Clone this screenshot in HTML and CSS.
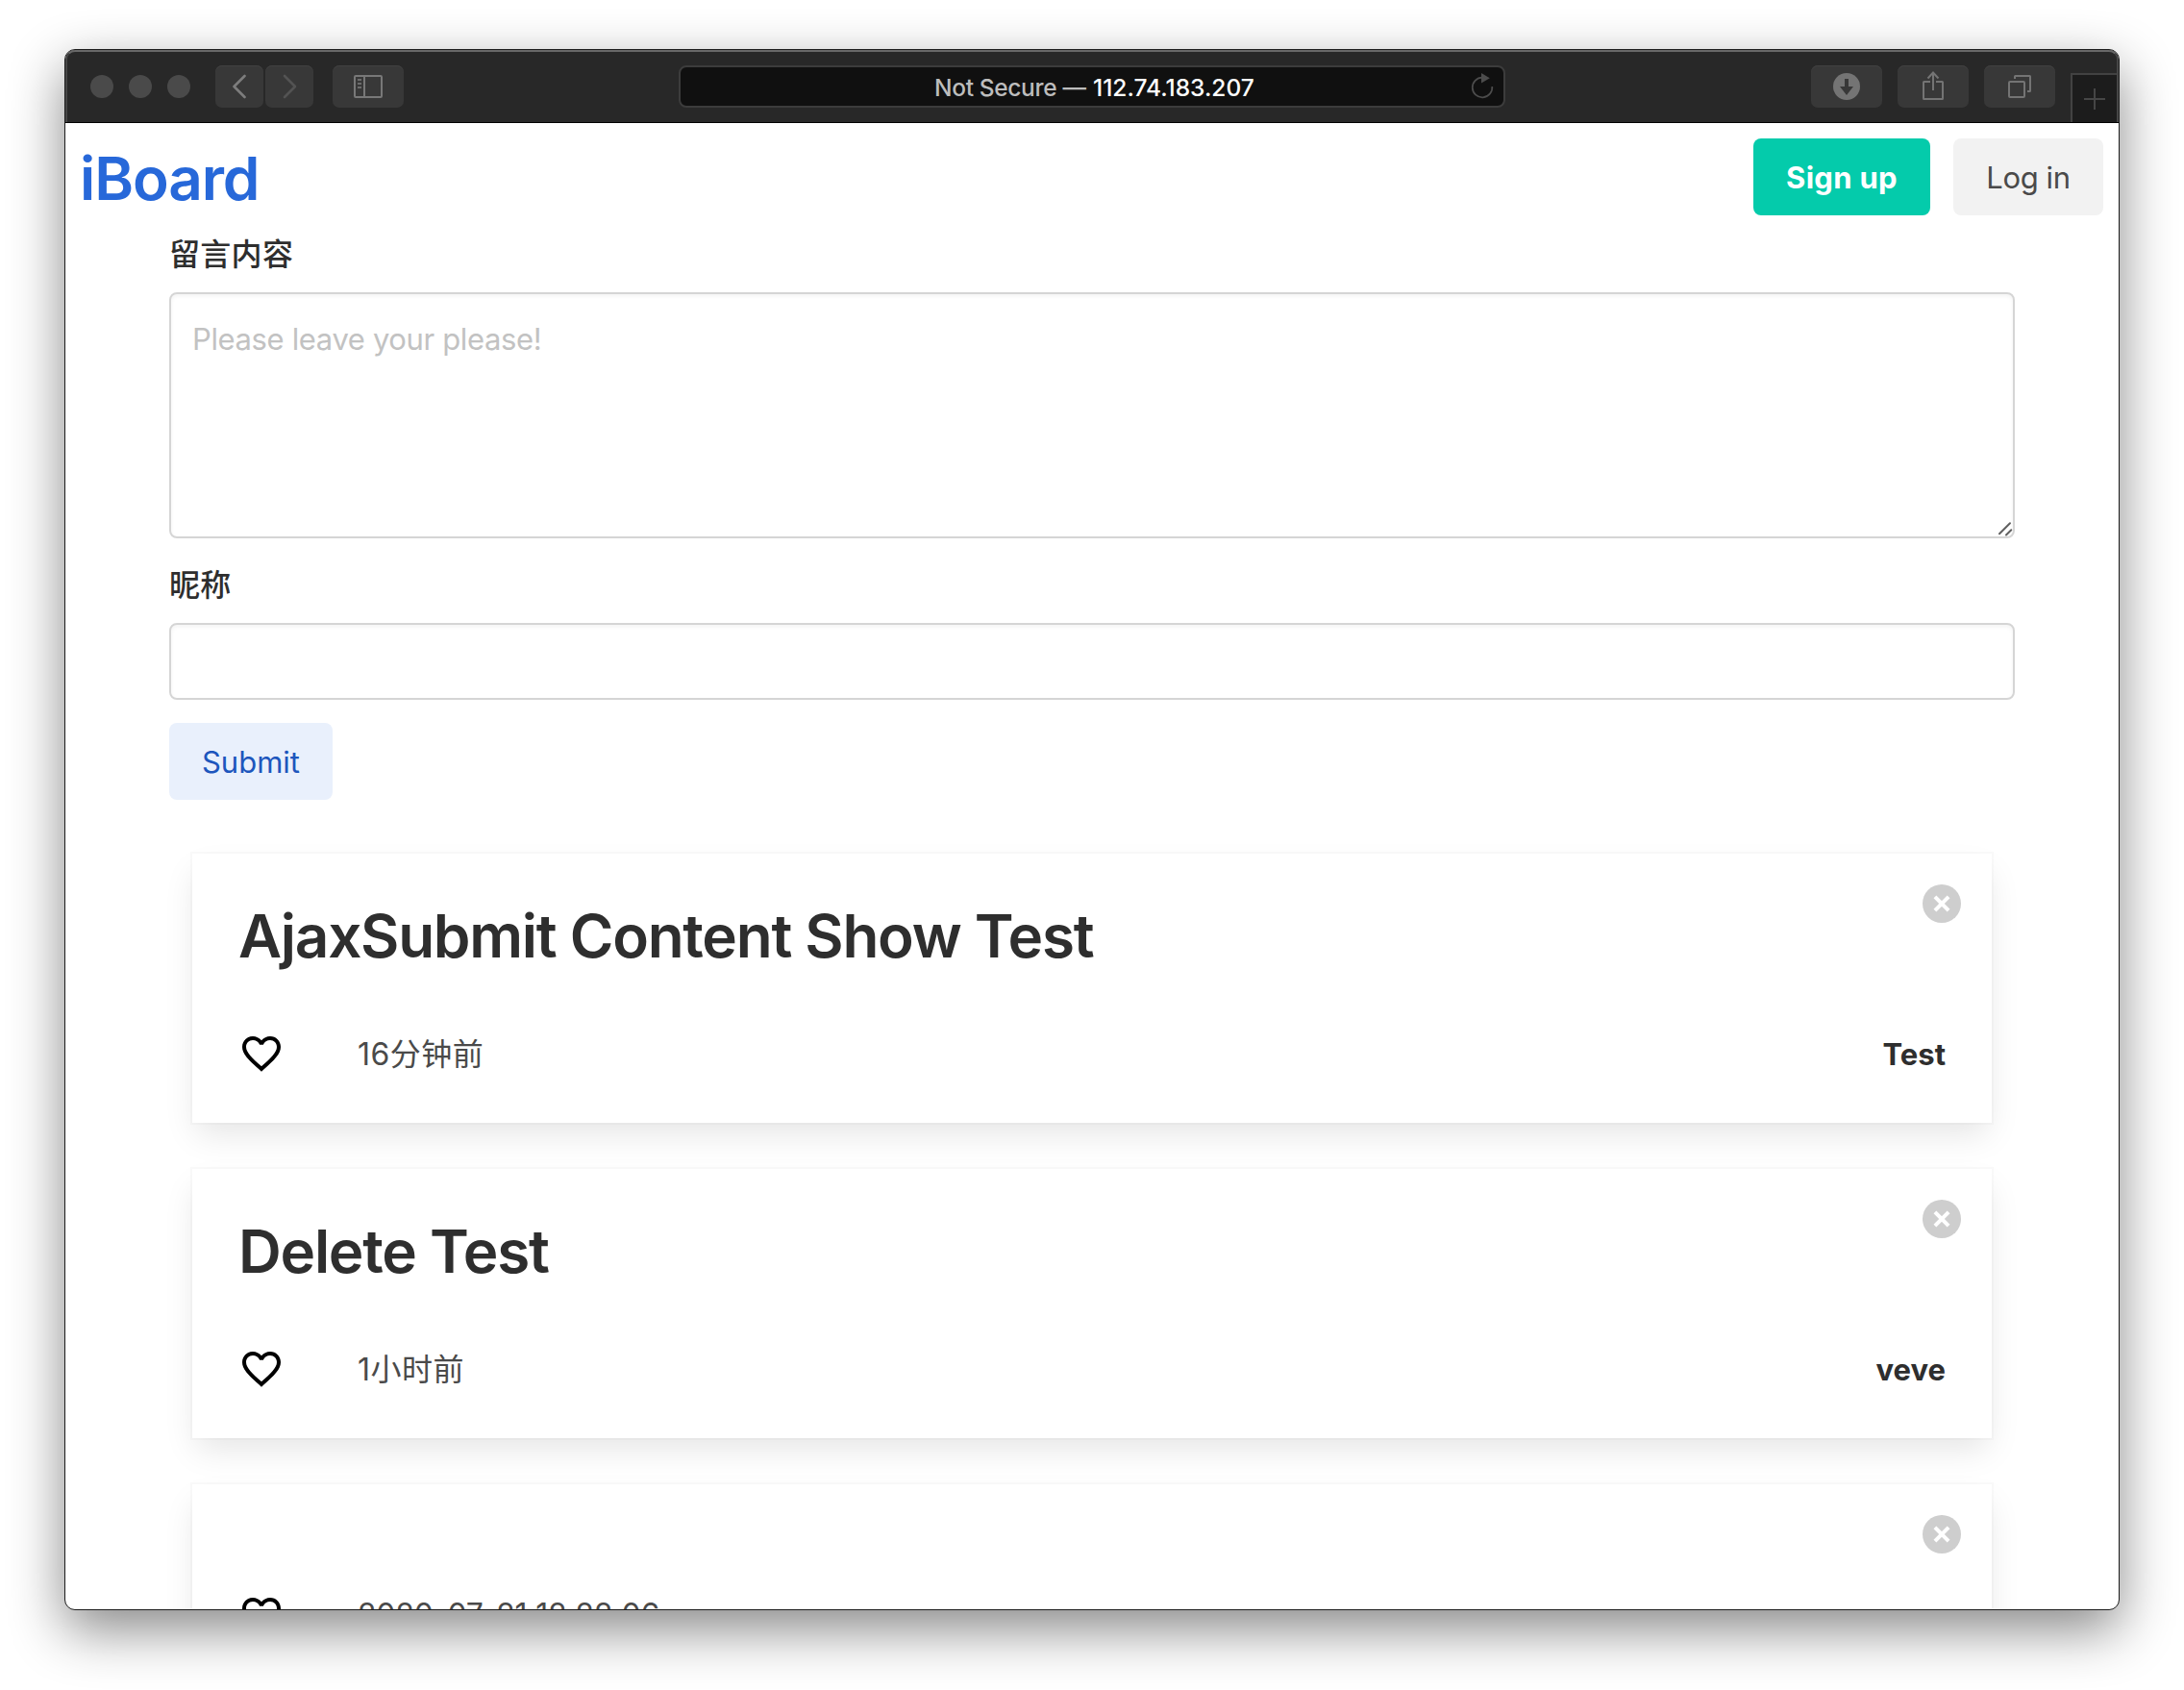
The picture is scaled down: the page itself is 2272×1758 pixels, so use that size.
FILE: index.html
```html
<!DOCTYPE html>
<html lang="zh-CN">
<head>
<meta charset="utf-8">
<title>iBoard</title>
<link rel="stylesheet" href="styles.css">
</head>
<body>
<div class="window">
  <div class="toolbar">
    <div class="lights"><span class="light"></span><span class="light"></span><span class="light"></span></div>
    <div class="history">
      <div class="tool tool-narrow"><svg width="50" height="44" viewBox="0 0 50 44"><path d="M30.5 11 L19.5 22 L30.5 33" fill="none" stroke="#7d7d7d" stroke-width="2.6" stroke-linecap="round" stroke-linejoin="round"/></svg></div>
      <div class="tool tool-narrow"><svg width="50" height="44" viewBox="0 0 50 44"><path d="M20 11 L31 22 L20 33" fill="none" stroke="#535353" stroke-width="2.6" stroke-linecap="round" stroke-linejoin="round"/></svg></div>
    </div>
    <div class="tool tool-sidebar"><svg width="74" height="44" viewBox="0 0 74 44" fill="none" stroke="#787878" stroke-width="2"><rect x="23" y="11" width="28" height="22" rx="1"/><path d="M33 11V33"/><path d="M26 15h4M26 19h4M26 23h4" stroke="#6c6c6c"/></svg></div>
    <div class="address">
      <span class="insecure">Not Secure —</span>
      <span class="host">112.74.183.207</span>
      <svg class="reload" width="28" height="32" viewBox="0 0 28 32"><path d="M24.3 16 A10.3 10.3 0 1 1 14 6.7" fill="none" stroke="#4c4c4c" stroke-width="1.7"/><path d="M13 2v10.5L21.8 7.2z" fill="#4c4c4c"/></svg>
    </div>
    <div class="actions">
      <div class="tool"><svg width="74" height="44" viewBox="0 0 74 44"><circle cx="37" cy="22" r="14" fill="#747474"/><path d="M35 14h4v8h5L37 31L30 22h5z" fill="#383838"/></svg></div>
      <div class="tool"><svg width="74" height="44" viewBox="0 0 74 44" fill="none" stroke="#747474" stroke-width="2"><path d="M34 17H27.5Q27 17 27 17.5V34.5Q27 35 27.5 35H46.5Q47 35 47 34.5V17.5Q47 17 46.5 17H40"/><path d="M37 26V8M31.5 13.5L37 7.5L42.5 13.5"/></svg></div>
      <div class="tool"><svg width="74" height="44" viewBox="0 0 74 44" fill="none" stroke="#747474" stroke-width="2"><rect x="26" y="17" width="16" height="16" rx="1"/><path d="M32 14V11.5Q32 11 32.5 11H47.5Q48 11 48 11.5V26.5Q48 27 47.5 27H45"/></svg></div>
    </div>
    <div class="new-tab"><svg width="48" height="49" viewBox="0 0 48 49"><path d="M23 14v22M12 25h22" stroke="#464646" stroke-width="2"/></svg></div>
  </div>
  <div class="page">
    <header class="navbar">
      <h1 class="brand">iBoard</h1>
      <div class="buttons">
        <a class="button button-primary">Sign up</a>
        <a class="button button-light">Log in</a>
      </div>
    </header>
    <main class="container">
      <form class="form">
        <label class="label" for="content">留言内容</label>
        <div class="control">
          <textarea class="textarea" id="content" placeholder="Please leave your please!"></textarea>
          <svg class="grip" width="16" height="16" viewBox="0 0 16 16"><path d="M2 13.3L13 2.3M9 14.5L14.3 9.2" stroke="#606060" stroke-width="2" stroke-linecap="round"/></svg>
        </div>
        <label class="label" for="nickname">昵称</label>
        <input class="input" id="nickname" type="text">
        <button class="button button-submit" type="button">Submit</button>
      </form>
      <section class="messages">
        <article class="card">
          <span class="delete"></span>
          <h2 class="title">AjaxSubmit Content Show Test</h2>
          <div class="meta">
            <svg class="heart" viewBox="0 0 24 24"><path d="M16.5 3c-1.74 0-3.41.81-4.5 2.09C10.91 3.81 9.24 3 7.5 3 4.42 3 2 5.42 2 8.5c0 3.78 3.4 6.86 8.55 11.54L12 21.35l1.45-1.32C18.6 15.36 22 12.28 22 8.5 22 5.42 19.58 3 16.5 3zm-4.4 15.55l-.1.1-.1-.1C7.14 14.24 4 11.39 4 8.5 4 6.5 5.5 5 7.5 5c1.54 0 3.04.99 3.57 2.36h1.87C13.46 5.99 14.96 5 16.5 5c2 0 3.5 1.5 3.5 3.5 0 2.89-3.14 5.74-7.9 10.05z"/></svg>
            <span class="time">16分钟前</span>
            <strong class="author">Test</strong>
          </div>
        </article>
        <article class="card">
          <span class="delete"></span>
          <h2 class="title">Delete Test</h2>
          <div class="meta">
            <svg class="heart" viewBox="0 0 24 24"><path d="M16.5 3c-1.74 0-3.41.81-4.5 2.09C10.91 3.81 9.24 3 7.5 3 4.42 3 2 5.42 2 8.5c0 3.78 3.4 6.86 8.55 11.54L12 21.35l1.45-1.32C18.6 15.36 22 12.28 22 8.5 22 5.42 19.58 3 16.5 3zm-4.4 15.55l-.1.1-.1-.1C7.14 14.24 4 11.39 4 8.5 4 6.5 5.5 5 7.5 5c1.54 0 3.04.99 3.57 2.36h1.87C13.46 5.99 14.96 5 16.5 5c2 0 3.5 1.5 3.5 3.5 0 2.89-3.14 5.74-7.9 10.05z"/></svg>
            <span class="time">1小时前</span>
            <strong class="author">veve</strong>
          </div>
        </article>
        <article class="card">
          <span class="delete"></span>
          <h2 class="title"></h2>
          <div class="meta">
            <svg class="heart" viewBox="0 0 24 24"><path d="M16.5 3c-1.74 0-3.41.81-4.5 2.09C10.91 3.81 9.24 3 7.5 3 4.42 3 2 5.42 2 8.5c0 3.78 3.4 6.86 8.55 11.54L12 21.35l1.45-1.32C18.6 15.36 22 12.28 22 8.5 22 5.42 19.58 3 16.5 3zm-4.4 15.55l-.1.1-.1-.1C7.14 14.24 4 11.39 4 8.5 4 6.5 5.5 5 7.5 5c1.54 0 3.04.99 3.57 2.36h1.87C13.46 5.99 14.96 5 16.5 5c2 0 3.5 1.5 3.5 3.5 0 2.89-3.14 5.74-7.9 10.05z"/></svg>
            <span class="time time-date">2020-07-21 12:22:06</span>
          </div>
        </article>
      </section>
    </main>
  </div>
</div>
</body>
</html>
```
FILE: styles.css
```css
* {
  box-sizing: border-box;
}

body {
  margin: 0;
  padding: 51px 67px 0;
  height: 1758px;
  overflow: hidden;
  background: #fff;
  color: #4a4a4a;
  font: 31px/48px Inter, "Noto Sans CJK SC", sans-serif;
}

svg {
  display: block;
}

.window {
  display: flex;
  flex-direction: column;
  width: 2138px;
  height: 1624px;
  border: 1px solid #1c1c1c;
  border-radius: 11px;
  overflow: hidden;
  background: #fff;
  box-shadow: 0 20px 56px rgba(0, 0, 0, 0.47);
}

/* Browser toolbar */
.toolbar {
  position: relative;
  display: flex;
  align-items: flex-start;
  flex: none;
  height: 76px;
  padding-top: 16px;
  border-bottom: 1px solid #000;
  background: #282828;
}

.toolbar::after {
  content: "";
  position: absolute;
  inset: 0;
  border: 2px solid #464646;
  border-top-color: #686868;
  border-bottom: 0;
  border-radius: 10px 10px 0 0;
}

.lights {
  display: flex;
  gap: 16px;
  margin: 10px 26px 0;
}

.light {
  width: 24px;
  height: 24px;
  border-radius: 50%;
  background: #4a4a4a;
}

.history {
  display: flex;
  gap: 2px;
}

.tool {
  width: 74px;
  height: 44px;
  border-radius: 7px;
  background: #383838;
  box-shadow: inset 0 1px #414141;
}

.tool-narrow {
  width: 50px;
}

.tool-sidebar {
  margin-left: 20px;
}

.address {
  display: flex;
  align-items: center;
  width: 860px;
  height: 44px;
  margin-left: 286px;
  padding: 0 8px 0 264px;
  border: 2px solid #3c3c3c;
  border-radius: 8px;
  background: #101010;
  font-size: 24.5px;
  line-height: 40px;
  font-weight: 500;
  white-space: nowrap;
}

.insecure,
.host {
  padding-top: 2px;
}

.insecure {
  width: 165px;
  letter-spacing: -0.35px;
  color: #bdbdbd;
}

.host {
  color: #fff;
}

.reload {
  margin-left: auto;
}

.actions {
  display: flex;
  gap: 16px;
  margin-left: 318px;
}

.new-tab {
  width: 50px;
  height: 51px;
  margin: 8px 0 0 16px;
  border: 2px solid #424242;
  border-width: 2px 0 0 2px;
  background: #1c1c1c;
}

/* Page */
.page {
  flex: 1;
  overflow: hidden;
}

.navbar {
  display: flex;
  justify-content: space-between;
  height: 112px;
  padding: 16px 16px 0 15px;
}

.brand {
  margin: 0;
  font-size: 62px;
  line-height: 84px;
  font-weight: 600;
  letter-spacing: -1.1px;
  color: #2768d9;
}

.buttons {
  display: flex;
  gap: 24px;
}

.button {
  display: flex;
  align-items: center;
  justify-content: center;
  height: 80px;
  padding: 1px 0 0;
  border: 0;
  border-radius: 8px;
  font: inherit;
}

.button-primary {
  width: 184px;
  background: #04cbab;
  color: #fff;
  font-weight: 700;
  letter-spacing: 0.3px;
}

.button-light {
  width: 156px;
  background: #f2f2f2;
  color: #4a4a4a;
  letter-spacing: -0.4px;
}

.button-submit {
  width: 170px;
  margin-top: 24px;
  background: #e9f0fc;
  color: #1d56bd;
}

.container {
  width: 1920px;
  margin: 0 auto;
}

.label {
  display: block;
  height: 48px;
  margin-bottom: 16px;
  padding-top: 1px;
  font-size: 32px;
  font-weight: 500;
  letter-spacing: 0.3px;
  color: #2e2e2e;
}

.control {
  position: relative;
  margin-bottom: 24px;
}

.textarea,
.input {
  display: block;
  width: 100%;
  border: 2px solid #d5d5d5;
  border-radius: 8px;
  outline: 0;
  background: #fff;
  box-shadow: inset 0 2px 4px rgba(10, 10, 10, 0.05);
  font: inherit;
  color: #363636;
}

.textarea {
  height: 256px;
  padding: 23px 22px;
  resize: none;
  letter-spacing: -0.37px;
}

.textarea::placeholder {
  color: #c2c2c2;
  opacity: 1;
}

.grip {
  position: absolute;
  right: 2px;
  bottom: 2px;
}

.input {
  height: 80px;
  padding: 0 22px;
}

.messages {
  display: flex;
  flex-direction: column;
  gap: 48px;
  padding: 56px 24px;
}

.card {
  position: relative;
  padding: 48px;
  background: #fff;
  box-shadow: 0 16px 32px -4px rgba(10, 10, 10, 0.1), 0 0 0 2px rgba(10, 10, 10, 0.02);
}

.delete {
  position: absolute;
  top: 32px;
  right: 32px;
  width: 40px;
  height: 40px;
  border-radius: 50%;
  background: #cecece;
}

.delete::before,
.delete::after {
  content: "";
  position: absolute;
  top: 18px;
  left: 10px;
  width: 20px;
  height: 4px;
  background: #fff;
  transform: rotate(45deg);
}

.delete::after {
  transform: rotate(-45deg);
}

.title {
  margin: 0 0 64px;
  font-size: 62px;
  line-height: 72px;
  font-weight: 600;
  letter-spacing: -1.27px;
  color: #2e2e2e;
}

.title:not(:empty) {
  margin-bottom: 62px;
  padding-top: 2px;
}

.meta {
  display: flex;
  height: 48px;
}

.heart {
  width: 48px;
  height: 48px;
  margin-right: 76px;
}

.time {
  padding-top: 1px;
  font-size: 32px;
  letter-spacing: 0.5px;
}

.time-date {
  padding-top: 0;
  letter-spacing: -0.15px;
}

.author {
  margin-left: auto;
  padding-top: 1px;
  font-weight: 700;
  color: #2e2e2e;
}
```
